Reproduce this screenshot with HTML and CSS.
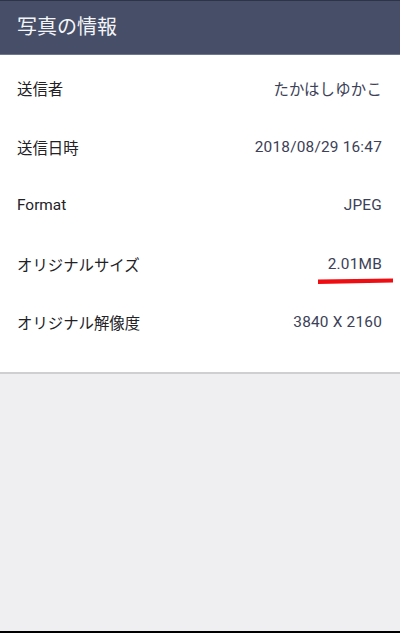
FILE: index.html
```html
<!DOCTYPE html>
<html>
	<head>
		<meta charset="utf-8">
		<title>写真の情報</title>
		<link rel="stylesheet" href="styles.css">
	</head>
	<body>
		<div id="screen">
			<div class="bar">写真の情報</div>
			<div class="sheet">
				<div class="row"><span class="label">送信者</span><span class="value">たかはしゆかこ</span></div>
				<div class="row"><span class="label">送信日時</span><span class="value">2018/08/29 16:47</span></div>
				<div class="row"><span class="label">Format</span><span class="value">JPEG</span></div>
				<div class="row marked">
					<span class="label">オリジナルサイズ</span><span class="value">2.01MB</span>
					<!-- hand drawn red underline -->
					<svg class="mark" width="80" height="10" viewBox="0 0 80 10">
						<polygon points="0,3.5 75,2.5 75,6.5 0,8" fill="#f00d12"/>
					</svg>
				</div>
				<div class="row"><span class="label">オリジナル解像度</span><span class="value">3840 X 2160</span></div>
			</div>
			<div class="rest"></div>
		</div>
	</body>
</html>
```

FILE: styles.css
```css
html, body {
	margin: 0;
	padding: 0;
	height: 100%;
}
body {
	font-family: Roboto, "Noto Sans CJK JP", sans-serif;
	background: #efeff1;
}
#screen {
	display: flex;
	flex-direction: column;
	height: 633px;
	border-bottom: 2px solid #000;
	box-sizing: border-box;
}
.bar {
	height: 55px;
	box-sizing: border-box;
	background: #464e68;
	border-top: 1px solid #2e3447;
	border-bottom: 1px solid #6e7690;
	color: #f4f5f8;
	font-size: 20px;
	line-height: 53px;
	padding-left: 17px;
}
.sheet {
	background: #fff;
	padding: 4px 0 20px;
	border-bottom: 2px solid #cfcfd2;
}
.row {
	height: 58.5px;
	display: flex;
	align-items: center;
	justify-content: space-between;
	padding: 0 18px 0 17px;
	font-size: 15.4px;
	position: relative;
}
.label {
	color: #222226;
}
.value {
	color: #3c4157;
	letter-spacing: 0.2px;
}
.mark {
	position: absolute;
	left: 318px;
	top: 41px;
}
.rest {
	flex: 1;
	background: #efeff1;
}
```
